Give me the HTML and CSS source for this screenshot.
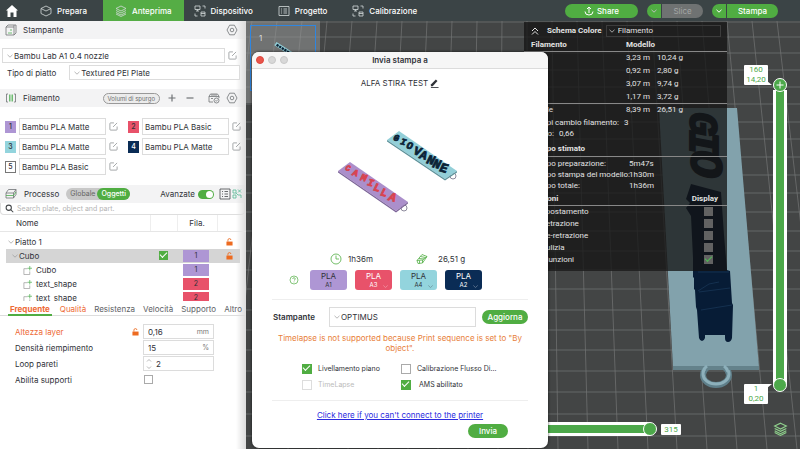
FILE: index.html
```html
<!DOCTYPE html>
<html lang="it">
<head>
<meta charset="utf-8">
<title>Anteprima</title>
<link rel="stylesheet" href="styles.css">
</head>
<body>
<svg class="defs" aria-hidden="true">
  <symbol id="chev" viewBox="0 0 8 8"><path d="M1.5 2.8 4 5.2 6.500 2.800"/></symbol>
  <symbol id="gear" viewBox="0 0 12 12"><path d="M3.600 1.200h4.800L11 6l-2.600 4.800H3.600L1 6z"/><circle cx="6" cy="6" r="1.800"/></symbol>
  <symbol id="edit" viewBox="0 0 10 10"><path d="M5.500 1H1.800Q1 1 1 1.800v6.400q0 .8.800.8h6.400q.8 0 .8-.8V5M4.500 5.500 9 1"/></symbol>
  <symbol id="device" viewBox="0 0 12 12"><path d="M1 1h5v3.500H1zM3.500 4.500V6M2 6h3M8.500 1H11v2.500M1 8.500V11h2.500M7 7h4v4H7zM7 8.500h4"/></symbol>
  <symbol id="layers" viewBox="0 0 12 12"><path d="M6 1 11 3.500 6 6 1 3.500zM1 5.500 6 8l5-2.500M1 7.500 6 10l5-2.500M1 9 6 11.500 11 9"/></symbol>
  <symbol id="lock" viewBox="0 0 8 9"><path class="solid" d="M.5 4h7v4.500h-7z"/><path d="M2.200 4V2.500a1.700 1.700 0 0 1 3.400-.3"/></symbol>
  <symbol id="part" viewBox="0 0 10 10"><path d="M5 3H1v6.500h6.500V6"/><path class="plus" d="M7.500 0v5M5 2.500h5"/></symbol>
</svg>

<header class="topbar">
  <a class="home" href="#" aria-label="Home"><svg viewBox="0 0 12 12"><path d="M6 0 0 5.500h1.500V12h3V7.500h3V12h3V5.500H12z"/></svg></a>
  <nav class="tabs">
    <a class="tab prepara" href="#"><svg class="ico" viewBox="0 0 12 12"><path d="M6 1l5 2.500v5L6 11 1 8.500v-5zM1 3.500 6 6l5-2.500"/></svg>Prepara</a>
    <a class="tab anteprima" href="#"><svg class="ico"><use href="#layers"/></svg>Anteprima</a>
    <a class="tab" href="#"><svg class="ico"><use href="#device"/></svg>Dispositivo</a>
    <a class="tab" href="#"><svg class="ico" viewBox="0 0 12 12"><path d="M1 1.500h10v9H1zM3 4h1M3 6h1M3 8h1M5.500 4H9M5.500 6H9M5.500 8H9"/></svg>Progetto</a>
    <a class="tab" href="#"><svg class="ico"><use href="#device"/></svg>Calibrazione</a>
  </nav>
  <div class="actions">
    <button class="pill share"><svg class="ico small" viewBox="0 0 10 10"><path d="M5 7V1M3 3l2-2 2 2M1 5.500q0 3.500 4 3.500t4-3.500"/></svg>Share</button>
    <div class="split off"><button class="drop" aria-label="Opzioni slice"><svg class="ico small"><use href="#chev"/></svg></button><button class="main">Slice</button></div>
    <div class="split"><button class="drop" aria-label="Opzioni stampa"><svg class="ico small"><use href="#chev"/></svg></button><button class="main">Stampa</button></div>
  </div>
</header>

<main class="work">
  <aside class="side">
    <section>
      <h2 class="bar"><svg class="ico" viewBox="0 0 12 12"><path d="M1 3h8v8H1zM1 3l2-2h8v8l-2 2M9 1v2"/><path class="leaf" d="M3 9h4M5 6h2"/></svg><span class="grow">Stampante</span><svg class="ico"><use href="#gear"/></svg></h2>
      <div class="printer">
        <label class="pick grow"><svg class="chev"><use href="#chev"/></svg><select aria-label="Stampante"><option>Bambu Lab A1 0.4 nozzle</option></select></label>
        <button class="bare" aria-label="Modifica stampante"><svg class="ico pen"><use href="#edit"/></svg></button>
      </div>
      <div class="plate">
        <label for="plate">Tipo di piatto</label>
        <div class="pick grow"><svg class="chev"><use href="#chev"/></svg><select id="plate"><option>Textured PEI Plate</option></select></div>
      </div>
    </section>

    <section>
      <h2 class="bar"><svg class="ico" viewBox="0 0 12 12"><path d="M3 2H1.500v8H3M9 2h1.500v8H9"/><path class="leaf" d="M4.500 2.500v7M6 2.500v7M7.500 2.500v7"/></svg><span class="grow">Filamento</span>
        <button class="purge">Volumi di spurgo</button>
        <button class="bare" aria-label="Aggiungi"><svg class="ico" viewBox="0 0 12 12"><path class="bold" d="M6 2.500v7M2.500 6h7"/></svg></button>
        <button class="bare" aria-label="Rimuovi"><svg class="ico" viewBox="0 0 12 12"><path class="bold" d="M2.500 6h7"/></svg></button>
        <svg class="ico ams" viewBox="0 0 12 12"><path d="M1 4.500 2.500 2h7L11 4.500M1 4.500h10M1 4.500V10h4M3 6.500h2M11 4.500V6M4 2v2M6 2v2M8 2v2"/><circle cx="8.500" cy="8.500" r="2.500"/><path d="M7.500 8.500l.8.800 1.400-1.600"/></svg>
        <svg class="ico"><use href="#gear"/></svg></h2>
      <div class="spools">
        <div class="spool"><b class="chip lilac">1</b><input aria-label="Filamento 1" value="Bambu PLA Matte"><svg class="ico pen"><use href="#edit"/></svg></div>
        <div class="spool"><b class="chip red">2</b><input aria-label="Filamento 2" value="Bambu PLA Basic"><svg class="ico pen"><use href="#edit"/></svg></div>
        <div class="spool"><b class="chip aqua">3</b><input aria-label="Filamento 3" value="Bambu PLA Matte"><svg class="ico pen"><use href="#edit"/></svg></div>
        <div class="spool"><b class="chip navy">4</b><input aria-label="Filamento 4" value="Bambu PLA Matte"><svg class="ico pen"><use href="#edit"/></svg></div>
        <div class="spool"><b class="chip blank">5</b><input aria-label="Filamento 5" value="Bambu PLA Basic"><svg class="ico pen"><use href="#edit"/></svg></div>
      </div>
    </section>

    <section>
      <h2 class="bar process"><svg class="ico" viewBox="0 0 12 12"><path d="M3.500 1.500H11L8.500 5H1zM1 5v5h7.500L11 6.500v-5M8.500 5v5"/><path class="leaf" d="M1 7.500h7.500L11 4"/></svg><span class="label">Processo</span>
        <span class="seg"><button>Globale</button><button class="on">Oggetti</button></span>
        <label class="adv">Avanzate<input type="checkbox" class="switch" checked></label>
        <svg class="ico dark" viewBox="0 0 12 12"><path d="M1 1h10v10H1zM3 3.500h1M3 6h1M3 8.500h1M5.500 3.500H9M5.500 6H9M5.500 8.500H9"/></svg>
        <svg class="ico mint" viewBox="0 0 10 12"><path d="M1 2h3v3H1zM6 1.500l3 3M9 1.500l-3 3M1 7h3v3H1zM6 7h3v3M4 5l2 2"/></svg></h2>
      <label class="search"><svg class="ico dark" viewBox="0 0 12 12"><circle cx="5" cy="5" r="3.500"/><path d="M7.500 7.500 11 11"/></svg><input type="search" aria-label="Cerca" placeholder="Search plate, object and part."></label>
      <div class="treebox">
      <table class="tree">
        <thead><tr><th class="name">Nome</th><th class="c-print"></th><th class="c-fila">Fila.</th><th class="c-lock"></th></tr></thead>
        <tbody>
          <tr><td class="l0"><svg class="chev"><use href="#chev"/></svg>Piatto 1</td><td></td><td></td><td><svg class="lock"><use href="#lock"/></svg></td></tr>
          <tr class="sel"><td class="l1"><svg class="chev"><use href="#chev"/></svg>Cubo</td><td><input type="checkbox" class="tick" aria-label="Stampa Cubo" checked></td><td><span class="tag lilac">1</span></td><td><svg class="lock"><use href="#lock"/></svg></td></tr>
          <tr><td class="l2"><svg class="ico part"><use href="#part"/></svg>Cubo</td><td></td><td><span class="tag lilac">1</span></td><td></td></tr>
          <tr><td class="l2"><svg class="ico part"><use href="#part"/></svg>text_shape</td><td></td><td><span class="tag red">2</span></td><td></td></tr>
          <tr><td class="l2"><svg class="ico part"><use href="#part"/></svg>text_shape</td><td></td><td><span class="tag red">2</span></td><td></td></tr>
        </tbody>
      </table>
      </div>
      <nav class="subtabs"><a class="on" href="#">Frequente</a><a class="mod" href="#">Qualità</a><a href="#">Resistenza</a><a href="#">Velocità</a><a href="#">Supporto</a><a href="#">Altro</a></nav>
      <div class="params">
        <div class="param mod"><label for="layer">Altezza layer</label><svg class="lock"><use href="#lock"/></svg><span class="field"><input id="layer" value="0,16"><i>mm</i></span></div>
        <div class="param"><label for="fill">Densità riempimento</label><span class="field"><input id="fill" value="15"><i>%</i></span></div>
        <div class="param"><label for="loop">Loop pareti</label><span class="field"><svg class="spin" viewBox="0 0 6 12"><path d="M1 3.500 3 1.500l2 2M1 8.500l2 2 2-2"/></svg><input id="loop" value="2"></span></div>
        <div class="param"><label for="supp">Abilita supporti</label><span class="field plain"><input type="checkbox" class="tick" id="supp"></span></div>
      </div>
    </section>
  </aside>

  <section class="view">
    <svg class="scene" viewBox="246 21 554 428" preserveAspectRatio="xMaxYMin slice" aria-hidden="true">
      <g class="grid">
        <path d="M246 22H800M246 37H800M246 53H800M246 70H800M246 87H800M246 104H800M246 122H800M246 139H800M246 157H800M246 175H800M246 193H800M246 212H800M246 231H800M246 251H800M246 270H800M246 289H800M246 310H800M246 330H800M246 350H800M246 371H800M246 392H800M246 414H800M246 436H800"/>
        <path d="M252 21 198 449M277 21 228 449M302 21 258 449M327 21 288 449M352 21 318 449M377 21 348 449M402 21 378 449M427 21 408 449M452 21 438 449M477 21 468 449M502 21 498 449M527 21 528 449M552 21 558 449M577 21 588 449M602 21 618 449M627 21 648 449M652 21 677 449M677 21 707 449M702 21 737 449M727 21 767 449M752 21 797 449M777 21 827 449"/>
      </g>
      <ellipse cx="716" cy="375" rx="13" ry="10" class="ring"/>
      <ellipse cx="716" cy="374" rx="13" ry="10" class="ringlight"/>
      <path class="slab" d="M659 108h78l22 259h-86z"/>
      <path class="slabedge" d="M673 366h86v4h-86z"/>
      <path class="tail" d="M703 372q1-4 4-6M724 366q3 2 4 6"/>
      <g class="letters">
        <text transform="translate(690 112) rotate(90)" font-size="40">G</text>
        <text transform="translate(690 130) rotate(90)" font-size="42">I</text>
        <text transform="translate(691 150) rotate(90)" font-size="46">O</text>
      </g>
      <path class="block" d="M691 184l30 8 3 43 3 35 3 1 1 16 1 16 1 2-1 33q-1 4-4 4t-3-4v-3h-20v3q-1 3-3 3t-3-3l-2-28-1-3-1-17-1-1v-11l-1-1v-19l-2-42-5-8 4-5-4-4z"/>
      <path class="shine" d="M698 291l11-7 10-2M699 292l31-4M701 310l31-5M698 272h31"/>
    </svg>

    <aside class="plates"><button class="thumb" aria-label="Piatto 1"><span>1</span><svg viewBox="0 0 34 20"><path class="aqua-f" d="M3 5 6 1 31 17 27 20z"/><path class="navy-s" d="M6 4.500 28 18"/></svg></button></aside>

    <aside class="legend">
      <div class="scheme"><svg class="ico small" viewBox="0 0 10 10"><path d="M2 5l3-3 3 3M2 8.500l3-3 3 3"/></svg><label for="scheme">Schema Colore</label><div class="pick"><svg class="chev"><use href="#chev"/></svg><select id="scheme"><option>Filamento</option></select></div></div>
      <table class="usage">
        <colgroup><col class="u-name"><col class="u-len"><col></colgroup>
        <thead><tr><th>Filamento</th><th colspan="2">Modello</th></tr></thead>
        <tbody>
          <tr><td></td><td>3,23 m</td><td>10,24 g</td></tr>
          <tr><td></td><td>0,92 m</td><td>2,80 g</td></tr>
          <tr><td></td><td>3,07 m</td><td>9,74 g</td></tr>
          <tr><td></td><td>1,17 m</td><td>3,72 g</td></tr>
        </tbody>
        <tfoot><tr><td>Totale</td><td>8,39 m</td><td>26,51 g</td></tr></tfoot>
      </table>
      <dl class="facts"><div><dt>Tempi cambio filamento:</dt><dd>3</dd></div><div><dt>Costo:</dt><dd>0,66</dd></div></dl>
      <h3>Tempo stimato</h3>
      <dl class="times"><dt>Tempo preparazione:</dt><dd>5m47s</dd><dt>Tempo stampa del modello:</dt><dd>1h30m</dd><dt>Tempo totale:</dt><dd>1h36m</dd></dl>
      <h3 class="opt"><span>Opzioni</span><span>Display</span></h3>
      <div class="shows">
        <label>Spostamento<input type="checkbox"></label>
        <label>Retrazione<input type="checkbox"></label>
        <label>De-retrazione<input type="checkbox"></label>
        <label>Pulizia<input type="checkbox"></label>
        <label>Giunzioni<input type="checkbox" checked></label>
      </div>
    </aside>

    <div class="vslider">
      <output class="tip top"><span>160</span><span>14,20</span></output>
      <div class="rails"><input type="range" class="low" aria-label="Primo layer" min="1" max="160" value="1"><input type="range" class="high" aria-label="Ultimo layer" min="1" max="160" value="160"><svg class="plusmark" viewBox="0 0 14 14"><path d="M7 3.500v7M3.500 7h7"/></svg></div>
      <output class="tip bottom"><span>1</span><span>0,20</span></output>
      <svg class="ico stack"><use href="#layers"/></svg>
    </div>
    <div class="hslider"><input type="range" aria-label="Mossa" min="0" max="315" value="315"><output class="tip side-tip">315</output></div>
  </section>
</main>

<section class="dialog" role="dialog" aria-labelledby="dlg">
  <header class="title"><span class="lights"><i class="close"></i><i></i><i></i></span><h1 id="dlg">Invia stampa a</h1></header>
  <div class="content">
    <p class="job">ALFA STIRA TEST<svg class="pencil" viewBox="0 0 10 10"><path class="solid" d="M1 8V6l5.500-5.500 1.800 1.800L3 8z"/><path d="M1 9.500h8.500"/></svg></p>
    <svg class="preview" viewBox="0 0 130 90" aria-hidden="true">
      <circle class="loop2" cx="119" cy="49" r="3"/>
      <path class="aqua-f" d="M53 13 65 4 123 44 111 52z"/><path class="aqua-e" d="M53 13v1.500L111 53.500 123 45.500V44L111 52z"/>
      <g class="word navy-t">
        <text transform="translate(59 13) rotate(15)" font-size="9">G</text><text transform="translate(66 17) rotate(15)" font-size="9">I</text><text transform="translate(72 21) rotate(15)" font-size="10">O</text><text transform="translate(79 27) rotate(15)" font-size="12">V</text><text transform="translate(85 31) rotate(15)" font-size="12">A</text><text transform="translate(92 36) rotate(15)" font-size="13">N</text><text transform="translate(98 40) rotate(15)" font-size="13">N</text><text transform="translate(105 44) rotate(15)" font-size="13">E</text>
      </g>
      <circle class="loop2" cx="70" cy="81" r="3"/>
      <path class="lilac-f" d="M4 44 16 35 74 75 62 84z"/><path class="lilac-e" d="M4 44v1.500L62 85.500 74 76.500V75L62 84z"/>
      <g class="word red-t">
        <text transform="translate(11 43) rotate(15)" font-size="8">C</text><text transform="translate(18 48) rotate(15)" font-size="9">A</text><text transform="translate(26 53) rotate(15)" font-size="10">M</text><text transform="translate(33 58) rotate(15)" font-size="10">I</text><text transform="translate(39 63) rotate(15)" font-size="11">L</text><text transform="translate(46 68) rotate(15)" font-size="11">L</text><text transform="translate(54 73) rotate(15)" font-size="12">A</text>
      </g>
    </svg>
    <div class="stats"><span><svg class="ico leafy" viewBox="0 0 12 12"><circle cx="6" cy="6" r="5"/><path d="M6 2.500V6h3"/></svg>1h36m</span><span><svg class="ico leafy" viewBox="0 0 12 12"><path d="M1 7.500 6 1.500l5 2L6.500 10 2 10.500zM1 7.500l5.500-.5L11 3.500M6.500 7v3M3 5.500l5 .500M4.500 3.500l5 1M3.500 7.500v3"/></svg>26,51 g</span></div>
    <div class="slots"><svg class="help" viewBox="0 0 10 10"><circle cx="5" cy="5" r="4"/><path d="M3.700 4q0-1.300 1.300-1.300T6.300 4q0 .7-1.300 1.400M5 6.600v.8"/></svg>
      <button class="slot lilac"><span>PLA</span><small>A1</small></button>
      <button class="slot red"><span>PLA</span><small>A3</small><svg class="chev"><use href="#chev"/></svg></button>
      <button class="slot aqua"><span>PLA</span><small>A4</small><svg class="chev"><use href="#chev"/></svg></button>
      <button class="slot navy"><span>PLA</span><small>A2</small><svg class="chev"><use href="#chev"/></svg></button></div>
    <div class="target"><label for="target">Stampante</label><div class="pick"><svg class="chev"><use href="#chev"/></svg><select id="target"><option>OPTIMUS</option></select></div><button class="pill">Aggiorna</button></div>
    <p class="warn">Timelapse is not supported because Print sequence is set to "By object".</p>
    <div class="options">
      <label><input type="checkbox" class="tick" checked>Livellamento piano</label>
      <label><input type="checkbox" class="tick">Calibrazione Flusso Di...</label>
      <label class="off"><input type="checkbox" class="tick" disabled>TimeLapse</label>
      <label class="ams-on"><input type="checkbox" class="tick" checked>AMS abilitato</label>
    </div>
    <a class="trouble" href="#">Click here if you can't connect to the printer</a>
    <button class="pill send">Invia</button>
  </div>
</section>
</body>
</html>
```
FILE: styles.css
```css
*, ::before, ::after { box-sizing: border-box; }
html, body { height: 100%; }
body { margin: 0; display: flex; flex-direction: column; overflow: hidden; position: relative; font: 8px/12px Inter, sans-serif; color: #303238; background: #434545; }
h1, h2, h3, p, dl, dd { margin: 0; font-weight: 400; }
button, input, select { font: inherit; color: inherit; margin: 0; padding: 0; border: 0; background: none; min-width: 0; }
select { appearance: none; flex: 1; }
a { color: inherit; text-decoration: none; }
svg { flex: none; fill: none; stroke: currentColor; stroke-width: 1; display: block; }
.defs { position: absolute; width: 0; height: 0; }
.ico { width: 12px; height: 12px; stroke-width: .8; color: #6f7275; }
.ico.small { width: 10px; height: 10px; stroke-width: 1; color: inherit; }
.ico.dark { color: #45484b; }
.ico.mint { color: #55b795; width: 10px; }
.leaf, .plus { stroke: #4caf50; }
.bold { stroke-width: 1.200; }
.solid { fill: currentColor; stroke: none; }
.chev { width: 8px; height: 8px; stroke-width: .7; color: #999; }
.pen { width: 9px; height: 9px; color: #85888a; }
.bare { display: flex; }
.grow { flex: 1; }
.lilac { background: #ae96d4; }
.red { background: #e8526a; }
.aqua { background: #93d4dd; }
.navy { background: #0a2c55; color: #fff; }
.lock { width: 7px; height: 8px; color: #ed6b21; stroke-width: 1; }

/* Top bar */
.topbar { flex: none; height: 21px; display: flex; align-items: stretch; background: #3b4446; color: #fff; font-weight: 500; }
.home { width: 24px; display: flex; align-items: center; justify-content: center; }
.home svg { width: 12px; height: 12px; fill: #fff; stroke: none; }
.tabs { display: flex; flex: 1; }
.tab { display: flex; align-items: center; gap: 5px; padding: 0 15px 0 10px; color: #fff; }
.tab .ico { color: #d4dadb; }
.prepara { padding: 0 16px; }
.anteprima { background: #55ad45; padding: 0 12px; }
.actions { display: flex; align-items: center; gap: 9px; padding-right: 22px; }
.pill { background: #50ad42; color: #fff; border-radius: 8px; height: 14px; display: flex; align-items: center; justify-content: center; gap: 3px; font-weight: 500; }
.share { width: 73px; }
.split { display: flex; height: 14px; border-radius: 7px; overflow: hidden; gap: 1px; }
.split button { background: #50ad42; height: 14px; display: flex; align-items: center; justify-content: center; }
.split .drop { width: 14px; }
.split .drop .ico { width: 8px; height: 8px; }
.split .main { width: 51px; }
.split.off .main { width: 41px; background: #6f7272; color: #a4a6a6; font-weight: 400; }

/* Sidebar */
.work { flex: 1; min-height: 0; display: flex; }
.side { flex: none; width: 246px; background: linear-gradient(to right, #fff 236px, #dcdcdc); overflow: hidden; }
.bar { display: flex; align-items: center; height: 18px; gap: 6px; padding: 0 8px 0 5px; background: linear-gradient(to right, #f3f3f4 236px, #dcdcdc); font-size: 8px; }
.pick { display: flex; align-items: center; border: 1px solid #dcdcdc; background: #fff; height: 15px; padding: 0 3px; }
.printer { display: flex; align-items: center; gap: 3px; margin: 9px 9px 2px 2px; }
.plate { display: flex; align-items: center; gap: 13px; margin: 0 6px 9px 7px; }
.purge { border: 1px solid #999; border-radius: 6px; height: 11px; padding: 0 4px; font-size: 6px; line-height: 9px; color: #6c6e70; background: #ececec; }
.ams { margin-left: 6px; }
.spools { display: grid; grid-template-columns: 113px 113px; gap: 3px 10px; margin: 11px 0 10px 5px; }
.spool { display: flex; align-items: center; gap: 3px; height: 17px; }
.spool input { flex: 1; height: 17px; border: 1px solid #dcdcdc; padding: 0 2px; }
.chip { width: 11px; height: 12px; display: flex; align-items: center; justify-content: center; font-weight: 500; font-size: 7px; }
.blank { border: 1px solid #777; background: #fff; }
.process { gap: 5px; padding-right: 4px; }
.label { padding: 0 2px; }
.seg { display: flex; border-radius: 6px; background: #c8c8c8; color: #666; height: 12px; font-size: 7px; }
.seg button { padding: 0 2px 0 4px; }
.seg .on { background: #50ad42; color: #fff; border-radius: 6px; padding: 0 4px; font-weight: 500; }
.adv { display: flex; align-items: center; gap: 3px; margin-left: auto; }
.switch { appearance: none; width: 16px; height: 9px; border-radius: 5px; background: #50ad42; display: flex; justify-content: flex-end; padding: 1px; }
.switch::before { content: ""; width: 7px; height: 7px; border-radius: 4px; background: #fff; }
.process .mint { margin-left: -4px; }
.search { display: flex; align-items: center; gap: 3px; height: 12px; margin-right: 1px; padding: 0 4px; border: 1px solid #dedede; border-top: 0; border-radius: 0 0 4px 4px; }
.search .ico { width: 9px; height: 9px; stroke-width: 1.400; }
.search input { flex: 1; appearance: none; font-size: 7px; }
.search input::placeholder { color: #b4b4b4; }
.treebox { height: 86px; overflow: hidden; }
.tree { width: 100%; border-collapse: collapse; table-layout: fixed; font-size: 8px; }
.tree th { height: 16px; padding: 0; font-weight: 400; border-bottom: 1px solid #e6e6e6; }
.tree .name { text-align: left; padding-left: 16px; }
.c-print { width: 27px; border-left: 1px solid #eee; }
.c-fila { width: 40px; border-left: 1px solid #eee; }
.c-lock { width: 29px; border-left: 1px solid #eee; }
.tree tbody::before { content: ""; display: block; height: 3px; }
.tree td { height: 14px; padding: 0; }
.tree td > svg { display: inline-block; vertical-align: middle; }
.tree .lock { margin-left: 9px; }
.tree .tick { margin: 0 auto; }
.sel td { background: #d5d5d5; }
.sel td:first-child { background: linear-gradient(to right, transparent 6px, #d5d5d5 6px); }
.sel td:last-child { background: linear-gradient(to right, #d5d5d5 23px, transparent 23px); }
.tree .l0 { padding-left: 7px; }
.tree .l1 { padding-left: 11px; }
.tree .l2 { padding-left: 23px; }
.tree .part { width: 9px; height: 9px; margin-right: 4px; color: #999; }
.tag { display: block; margin: 0 6px; width: 26px; height: 12px; text-align: center; font-size: 7px; }
.tick { appearance: none; display: block; flex: none; width: 9px; height: 9px; border: 1px solid #aaa; background: #fff; }
.tick:checked { background: #50ad42; border-color: #50ad42; }
.tick:checked::before, .shows input:checked::before { content: ""; display: block; width: 7px; height: 4px; border: solid #fff; border-width: 0 0 1px 1px; transform: rotate(-45deg); }
.subtabs { display: flex; gap: 8px; padding: 0 8px; height: 15px; border-bottom: 1px solid #ddd; color: #606266; white-space: nowrap; }
.subtabs a { height: 15px; line-height: 17px; }
.subtabs .on { color: #ee6a35; font-weight: 700; border-bottom: 2px solid #50ad42; padding: 0 2px; }
.subtabs .mod, .mod { color: #ee6a35; }
.params { padding: 8px 32px 0 15px; display: grid; gap: 1px; }
.param { display: flex; align-items: center; gap: 4px; height: 15px; }
.param label { flex: 1; }
.field { display: flex; align-items: center; width: 71px; height: 15px; border: 1px solid #dcdcdc; padding: 0 4px; color: #303238; background: #fff; }
.field input:not(.tick) { flex: 1; width: 20px; }
.field i { font-style: normal; font-size: 7px; color: #777; }
.field.plain { border: 0; padding: 0 1px; background: none; }
.spin { width: 6px; height: 12px; color: #999; stroke-width: .7; margin: 0 4px 0 -2px; }

/* 3D view */
.view { flex: 1; position: relative; overflow: hidden; background: #434545; }
.scene { width: 100%; height: 100%; }
.grid { stroke: #747676; stroke-width: .7; }
.slab { fill: #82a2ac; stroke: none; }
.slabedge { fill: #64828b; stroke: none; }
.ring { stroke: #5f7f8a; stroke-width: 6; }
.ringlight { stroke: #8db0bb; stroke-width: 3; }
.tail { stroke: #8db0bb; stroke-width: 3; }
.letters text { font-family: "Liberation Mono", monospace; font-weight: 700; font-style: italic; fill: #14202c; stroke: #14202c; stroke-width: 2; }
.block { fill: #071c36; stroke: none; }
.shine { stroke: #14304f; stroke-width: 1; }
.plates { position: absolute; left: 0; top: 0; width: 74px; height: 82px; padding: 4px; background: rgba(150, 152, 152, .55); }
.thumb { width: 66px; height: 66px; border: 1px solid #2f86e0; color: #ddd; display: flex; align-items: flex-start; padding: 6px 8px; gap: 10px; }
.thumb svg { width: 26px; height: 16px; margin-top: 9px; }
.aqua-f { fill: #93cfd8; stroke: none; }
.aqua-e { fill: #5d929a; stroke: none; }
.navy-s { stroke: #0b2236; stroke-width: 3; stroke-dasharray: 3 1; }
.legend { position: absolute; left: 278px; top: 1px; width: 203px; padding: 0 0 5px; background: rgba(20, 20, 20, .76); color: #e2e2e2; font: 8px/12px Roboto, sans-serif; }
.scheme { display: flex; align-items: center; height: 17px; padding: 0 6px; gap: 7px; font-weight: 700; }
.legend label { white-space: nowrap; }
.scheme .pick { flex: 1; height: 12px; background: none; border-color: #3c3c3c; font-weight: 400; margin-left: -3px; gap: 2px; padding: 0 1px; }
.scheme .chev { color: #ddd; }
.usage { width: 100%; border-collapse: collapse; table-layout: fixed; }
.u-name { width: 102px; }
.u-len { width: 31px; }
.usage td, .usage th { padding: 0; text-align: left; height: 13px; line-height: 12px; }
.usage th { border-bottom: 1px solid #888; height: 12px; font-weight: 700; }
.usage th:first-child, .usage td:first-child { padding-left: 7px; }
.usage tfoot td { border-top: 1px solid #888; }
.facts { padding-left: 7px; line-height: 11px; }
.facts div { display: flex; gap: 5px; }
.legend h3 { font-size: 8px; font-weight: 700; padding: 4px 7px 0; height: 18px; border-bottom: 1px solid #888; }
.times { display: grid; grid-template-columns: 98px 1fr; padding: 1px 0 0 7px; line-height: 11px; white-space: nowrap; }
.legend h3.opt { display: flex; justify-content: space-between; padding: 1px 9px 0 7px; height: 14px; margin-top: 1px; }
.shows label { display: flex; align-items: center; justify-content: space-between; height: 12px; padding: 0 14px 0 17px; }
.shows input { appearance: none; width: 9px; height: 9px; background: #626262; }
.shows input:checked::before { border-color: #4fbb55; margin: 1px; }

/* Sliders */
.tip { background: #fff; color: #4ca84a; font: 8px/10px Roboto, sans-serif; text-align: center; border-radius: 1px; display: block; }
.tip span { display: block; }
.vslider { position: absolute; right: 12px; top: 44px; bottom: 13px; display: grid; grid-template-columns: 24px 16px; grid-template-rows: 20px 1fr 20px 18px 14px; column-gap: 4px; }
.tip.top, .tip.bottom { grid-column: 1; position: relative; }
.tip.top { grid-row: 1; }
.tip.bottom { grid-row: 3; }
.tip.top::after, .tip.bottom::after { content: ""; position: absolute; right: -4px; border: 0 solid transparent; border-left-color: #fff; }
.tip.top::after { bottom: 0; border-width: 4px 0 0 5px; }
.tip.bottom::after { top: 0; border-width: 0 0 4px 5px; }
.rails { grid-column: 2; grid-row: 1 / 4; display: grid; grid-template-columns: 14px; justify-content: center; margin: 13px 0 12px; }
.rails > *, .rails::before { grid-area: 1 / 1; }
.rails::before { content: ""; width: 14px; margin: 12px 0 8px; background: #4ca84a; border: solid #fff; border-width: 0 3px; }
.rails input { writing-mode: vertical-lr; direction: rtl; appearance: none; width: 14px; height: 100%; }
.rails input::-webkit-slider-runnable-track { width: 14px; height: 100%; }
input[type=range]::-webkit-slider-thumb { appearance: none; box-sizing: border-box; width: 14px; height: 14px; border-radius: 7px; background: #4ca84a; border: 1px solid #fff; }
.plusmark { width: 14px; height: 14px; color: #fff; z-index: 1; pointer-events: none; }
.stack { grid-column: 2; grid-row: 5; color: #8fd08c; width: 15px; height: 14px; justify-self: center; stroke-width: 1; }
.hslider { position: absolute; left: 200px; right: 119px; bottom: 12px; display: flex; align-items: center; gap: 4px; height: 16px; }
.hslider input { appearance: none; flex: 1; height: 14px; background: linear-gradient(#fff 3px, #4ca84a 3px, #4ca84a 11px, #fff 11px) 0 0 / calc(100% - 7px) 14px no-repeat; }
.hslider input::-webkit-slider-runnable-track { height: 14px; }
.side-tip { width: 20px; height: 11px; line-height: 11px; }

/* Send dialog */
.dialog { position: absolute; left: 252px; top: 52px; width: 296px; border-radius: 7px; background: #fff; box-shadow: 0 0 3px rgba(0, 0, 0, .7); overflow: hidden; }
.title { height: 17px; display: grid; grid-template-columns: 1fr auto 1fr; align-items: center; background: #f6f6f6; border-bottom: 1px solid #dcdcdc; }
.title h1 { font-size: 8px; font-weight: 600; }
.lights { display: flex; gap: 4px; padding-left: 4px; }
.lights i { width: 8px; height: 8px; border-radius: 4px; background: #d8d8d8; border: 1px solid #c8c8c8; }
.lights .close { background: #e9544b; border-color: #dd473e; }
.content { display: flex; flex-direction: column; padding: 7px 20px 10px; }
.job { display: flex; justify-content: center; align-items: center; gap: 2px; height: 14px; }
.pencil { width: 9px; height: 9px; }
.preview { width: 130px; height: 90px; margin: 37px 0 36px 62px; }
.word text { font-family: "Liberation Mono", monospace; font-weight: 700; font-style: italic; stroke-width: .8; }
.navy-t { fill: #0b2236; stroke: #0b2236; }
.red-t { fill: #d84450; stroke: #d84450; }
.lilac-f { fill: #ab8fcb; stroke: none; }
.lilac-e { fill: #7c6498; stroke: none; }
.loop2 { stroke: #8d8a9c; stroke-width: 1; }
.stats { display: grid; grid-template-columns: 86px 1fr; padding-left: 58px; }
.stats span { display: flex; align-items: center; gap: 6px; }
.stats span:last-child { gap: 10px; }
.leafy { color: #50ad42; }
.slots { display: flex; align-items: center; gap: 8px; padding: 5px 0 9px 17px; border-bottom: 1px solid #eee; }
.help { width: 10px; height: 10px; color: #50ad42; stroke-width: .7; margin-right: 3px; }
.slot { position: relative; width: 37px; height: 20px; border-radius: 3px; display: flex; flex-direction: column; align-items: center; line-height: 9px; padding-top: 2px; }
.slot small { font-size: 6px; line-height: 8px; }
.slot.red { color: #fff; }
.slot .chev { position: absolute; right: 3px; bottom: 0; width: 7px; height: 7px; color: inherit; opacity: .5; }
.target { display: flex; align-items: center; gap: 6px; padding: 7px 0 6px 1px; }
.target label { width: 50px; font-weight: 600; }
.target .pick { flex: 1; height: 20px; }
.target .pill { width: 46px; }
.warn { color: #e8803a; text-align: center; line-height: 10px; }
.options { display: grid; grid-template-columns: 99px 1fr; gap: 4px 0; margin-top: 10px; padding: 0 0 9px 30px; border-bottom: 1px solid #eee; font-size: 7px; }
.options label { display: flex; align-items: center; gap: 6px; }
.options .tick { width: 10px; height: 10px; }
.options .ams-on { gap: 8px; }
.off { color: #bbb; }
.off .tick { border-color: #ddd; }
.trouble { align-self: center; margin: 8px 0 3px; color: #2b2be0; text-decoration: underline; }
.send { align-self: flex-end; margin-right: 20px; width: 40px; }
```
